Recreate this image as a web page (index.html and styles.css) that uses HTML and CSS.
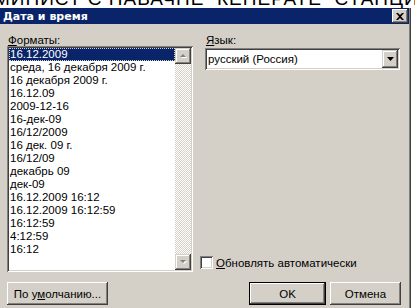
FILE: index.html
```html
<!DOCTYPE html>
<html lang="ru">
<head>
    <meta charset="UTF-8">
    <title>Дата и время</title>
    <link rel="stylesheet" href="styles.css">
</head>
<body>
    <div class="behind">
        <span>МИНИСТ С ПАВАЧНЕ &nbsp;КЕНЕРАТЕ &nbsp;СТАНЦИИ &nbsp;ПАНЕЛИ</span>
    </div>

    <div class="window">
        <div class="titlebar">
            <span class="title">Дата и время</span>
            <button class="close">
                <svg width="8" height="7" viewBox="0 0 8 7"><path d="M0 0h2l2 2 2-2h2L5 3.5 8 7H6L4 5 2 7H0l3-3.5z" fill="#000"/></svg>
            </button>
        </div>

        <div class="content">
            <div class="column">
                <div class="label"><u>Ф</u>орматы:</div>
                <div class="listbox">
                    <ul class="items" id="formats"></ul>
                    <div class="scrollbar">
                        <div class="sb-button">
                            <svg width="7" height="5" viewBox="0 0 7 5"><path d="M1 4h6L4 1z" fill="#fff"/><path d="M0 3h6L3 0z" fill="#808080"/></svg>
                        </div>
                        <div class="sb-track"></div>
                        <div class="sb-button">
                            <svg width="7" height="5" viewBox="0 0 7 5"><path d="M1 1h6L4 4z" fill="#fff"/><path d="M0 0h6L3 3z" fill="#808080"/></svg>
                        </div>
                    </div>
                </div>
            </div>

            <div class="column">
                <div class="label"><u>Я</u>зык:</div>
                <div class="combo">
                    <span class="combo-text">русский (Россия)</span>
                    <div class="combo-button">
                        <svg width="7" height="4" viewBox="0 0 7 4"><path d="M0 0h7L3.5 4z" fill="#000"/></svg>
                    </div>
                </div>
                <label class="check">
                    <span class="check-box"></span>
                    <span><u>О</u>бновлять автоматически</span>
                </label>
            </div>
        </div>

        <div class="footer">
            <button class="btn btn-wide">По у<u>м</u>олчанию...</button>
            <button class="btn btn-default">OK</button>
            <button class="btn btn-cancel">Отмена</button>
        </div>
    </div>

    <script>
        const formats = [
            '16.12.2009',
            'среда, 16 декабря 2009 г.',
            '16 декабря 2009 г.',
            '16.12.09',
            '2009-12-16',
            '16-дек-09',
            '16/12/2009',
            '16 дек. 09 г.',
            '16/12/09',
            'декабрь 09',
            'дек-09',
            '16.12.2009 16:12',
            '16.12.2009 16:12:59',
            '16:12:59',
            '4:12:59',
            '16:12'
        ];
        document.getElementById('formats').innerHTML = formats
            .map((f, i) => `<li class="${i === 0 ? 'selected' : ''}">${f}</li>`)
            .join('');
    </script>
</body>
</html>
```

FILE: styles.css
```css
body {
    margin: 0;
    background-color: #fff;
    font-family: "Liberation Sans", Arial, sans-serif;
    font-size: 11.5px;
    color: #000;
    overflow: hidden;
}
u {
    text-decoration: underline;
    text-underline-offset: 1px;
}
.behind {
    height: 8px;
    overflow: hidden;
    background-color: #fff;
    white-space: nowrap;
}
.behind span {
    display: block;
    font-size: 19px;
    line-height: 20px;
    margin-top: -11px;
    margin-left: -6px;
    letter-spacing: 1px;
}
.window {
    width: 409px;
    background-color: #d4d0c8;
    border-right: 1px solid #808080;
    box-shadow: 1px 0 0 #404040;
    height: 300px;
}
.titlebar {
    height: 16px;
    background-color: #0a246a;
    display: flex;
    align-items: center;
    justify-content: space-between;
    padding: 0 1px 0 3px;
}
.title {
    color: #fff;
    font-weight: bold;
    font-size: 11px;
    font-family: "DejaVu Sans", sans-serif;
}
.close {
    width: 16px;
    height: 14px;
    padding: 0;
    border: none;
    background-color: #d4d0c8;
    box-shadow: inset -1px -1px #404040, inset 1px 1px #fff, inset -2px -2px #808080;
    display: flex;
    align-items: center;
    justify-content: center;
}
.content {
    display: grid;
    grid-template-columns: 186px 195px;
    column-gap: 12px;
    padding: 10px 0 0 7px;
}
.column {
    display: flex;
    flex-direction: column;
}
.label {
    height: 12px;
    line-height: 12px;
    padding-left: 1px;
}
.listbox {
    height: 226px;
    background-color: #fff;
    box-shadow: inset 1px 1px #808080, inset -1px -1px #fff, inset 2px 2px #404040, inset -2px -2px #d4d0c8;
    padding: 2px;
    box-sizing: border-box;
    display: flex;
}
.items {
    list-style: none;
    margin: 0;
    padding: 0;
    flex: 1;
}
.items li {
    height: 13px;
    line-height: 13px;
    padding-left: 1px;
    white-space: nowrap;
}
.items li.selected {
    background-color: #0a246a;
    color: #fff;
    outline: 1px dotted #d4d0c8;
    outline-offset: -1px;
}
.scrollbar {
    width: 16px;
    display: flex;
    flex-direction: column;
}
.sb-button {
    height: 16px;
    background-color: #d4d0c8;
    box-shadow: inset -1px -1px #404040, inset 1px 1px #d4d0c8, inset -2px -2px #808080, inset 2px 2px #fff;
    display: flex;
    align-items: center;
    justify-content: center;
}
.sb-track {
    flex: 1;
    background-image: conic-gradient(#fff 25%, #d4d0c8 0 50%, #fff 0 75%, #d4d0c8 0);
    background-size: 2px 2px;
}
.combo {
    margin-top: 2px;
    height: 22px;
    background-color: #fff;
    box-shadow: inset 1px 1px #808080, inset -1px -1px #fff, inset 2px 2px #404040, inset -2px -2px #d4d0c8;
    padding: 2px;
    box-sizing: border-box;
    display: flex;
    align-items: center;
}
.combo-text {
    flex: 1;
    padding-left: 1px;
}
.combo-button {
    width: 16px;
    height: 18px;
    background-color: #d4d0c8;
    box-shadow: inset -1px -1px #404040, inset 1px 1px #d4d0c8, inset -2px -2px #808080, inset 2px 2px #fff;
    display: flex;
    align-items: center;
    justify-content: center;
}
.check {
    margin-top: auto;
    margin-bottom: 3px;
    display: flex;
    align-items: center;
    gap: 3px;
    margin-left: -5px;
}
.check-box {
    width: 13px;
    height: 13px;
    box-sizing: border-box;
    background-color: #fff;
    box-shadow: inset 1px 1px #808080, inset -1px -1px #fff, inset 2px 2px #404040, inset -2px -2px #d4d0c8;
}
.footer {
    display: flex;
    gap: 4px;
    padding: 10px 8px 0 7px;
}
.btn {
    height: 23px;
    padding: 0;
    border: none;
    background-color: #d4d0c8;
    font-family: "Liberation Sans", Arial, sans-serif;
    font-size: 11.5px;
    color: #000;
    box-shadow: inset -1px -1px #404040, inset 1px 1px #fff, inset -2px -2px #808080;
}
.btn-wide {
    width: 101px;
}
.btn-default {
    margin-left: auto;
    width: 77px;
    box-shadow: inset 0 0 0 1px #000, inset -2px -2px #404040, inset 2px 2px #fff, inset -3px -3px #808080;
}
.btn-cancel {
    width: 71px;
}
```
